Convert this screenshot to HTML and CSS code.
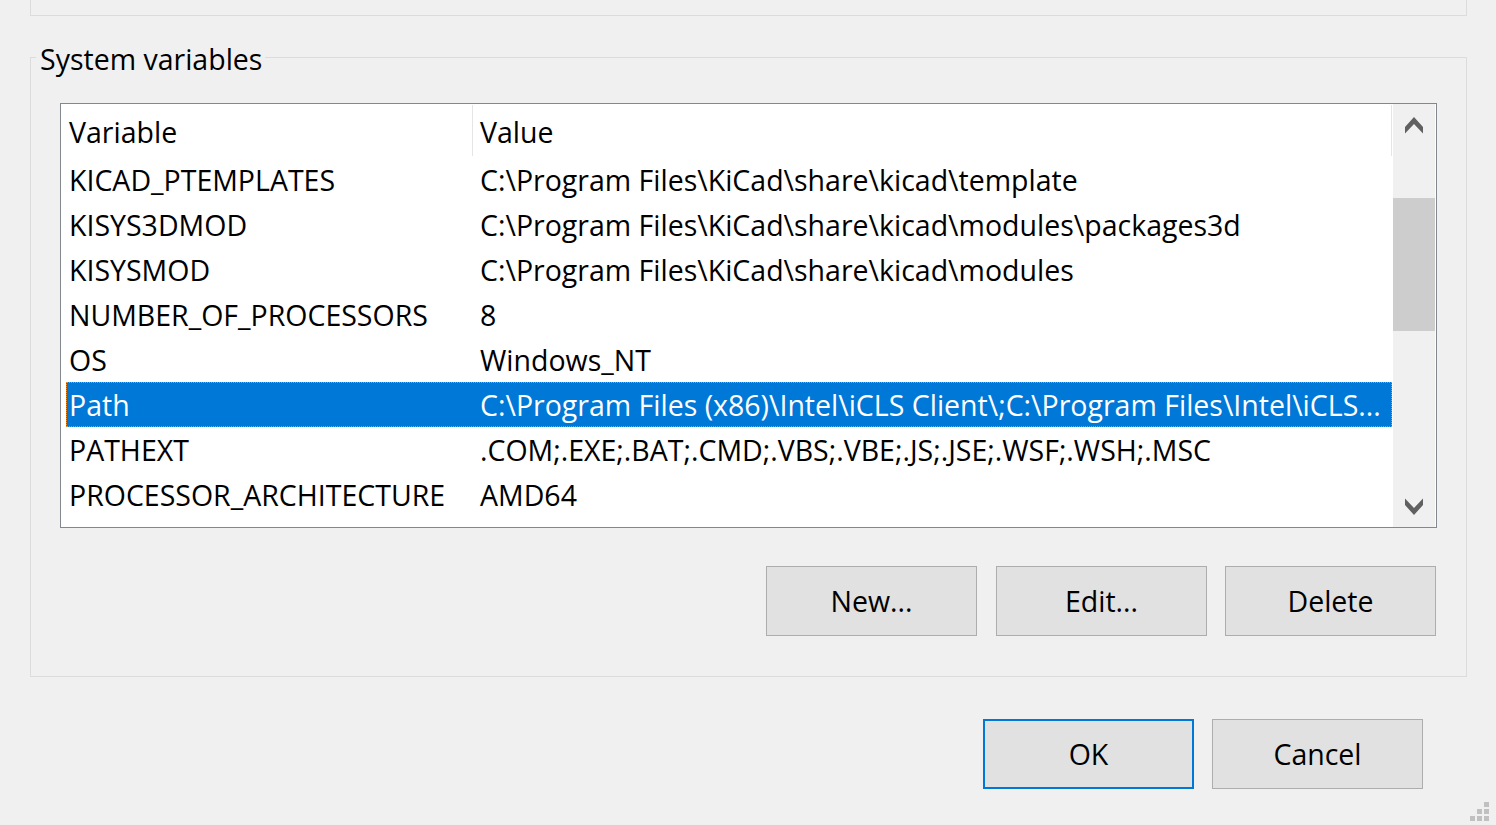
FILE: index.html
```html
<!DOCTYPE html>
<html lang="en">
<head>
<meta charset="utf-8">
<title>Environment Variables</title>
<link rel="stylesheet" href="styles.css">
</head>
<body>
<div class="dialog">
  <div class="prev-group"></div>

  <fieldset class="group">
    <legend class="group-title">System variables</legend>

    <div class="listbox">
      <div class="list-main">
        <div class="list-header">
          <div class="hcell hcell-var">Variable</div>
          <div class="hcell hcell-val">Value</div>
        </div>
        <div class="rows">
          <div class="row"><span class="cell-var">KICAD_PTEMPLATES</span><span class="cell-val">C:\Program Files\KiCad\share\kicad\template</span></div>
          <div class="row"><span class="cell-var">KISYS3DMOD</span><span class="cell-val">C:\Program Files\KiCad\share\kicad\modules\packages3d</span></div>
          <div class="row"><span class="cell-var">KISYSMOD</span><span class="cell-val">C:\Program Files\KiCad\share\kicad\modules</span></div>
          <div class="row"><span class="cell-var">NUMBER_OF_PROCESSORS</span><span class="cell-val">8</span></div>
          <div class="row"><span class="cell-var">OS</span><span class="cell-val">Windows_NT</span></div>
          <div class="row row-selected"><span class="cell-var">Path</span><span class="cell-val">C:\Program Files (x86)\Intel\iCLS Client\;C:\Program Files\Intel\iCLS...</span></div>
          <div class="row"><span class="cell-var">PATHEXT</span><span class="cell-val">.COM;.EXE;.BAT;.CMD;.VBS;.VBE;.JS;.JSE;.WSF;.WSH;.MSC</span></div>
          <div class="row"><span class="cell-var">PROCESSOR_ARCHITECTURE</span><span class="cell-val">AMD64</span></div>
        </div>
      </div>
      <div class="scrollbar">
        <div class="sb-btn">
          <svg class="sb-arrow" width="18" height="17" viewBox="0 0 18 17"><path d="M0 10 L9 0 L18 10 L18 16.5 L9 7 L0 16.5 Z" fill="#606060"/></svg>
        </div>
        <div class="sb-track"><div class="sb-thumb"></div></div>
        <div class="sb-btn">
          <svg class="sb-arrow" width="18" height="17" viewBox="0 0 18 17"><path d="M0 0.5 L9 10 L18 0.5 L18 7 L9 17 L0 7 Z" fill="#606060"/></svg>
        </div>
      </div>
    </div>

    <div class="actions">
      <button class="btn btn-new">New...</button>
      <button class="btn">Edit...</button>
      <button class="btn">Delete</button>
    </div>
  </fieldset>

  <div class="footer">
    <button class="btn btn-default">OK</button>
    <button class="btn">Cancel</button>
  </div>

  <div class="grip">
    <span class="gdot g3"></span>
    <span class="gdot g5"></span><span class="gdot g6"></span>
    <span class="gdot g7"></span><span class="gdot g8"></span><span class="gdot g9"></span>
  </div>
</div>
</body>
</html>
```

FILE: styles.css
```css
html, body {
  margin: 0;
  padding: 0;
  background: #f0f0f0;
}

body {
  width: 1496px;
  height: 825px;
  overflow: hidden;
  font-family: "Open Sans", "Noto Sans", "Liberation Sans", sans-serif;
  font-size: 28.5px;
  color: #000;
}

.dialog {
  position: relative;
  width: 1496px;
  height: 825px;
}

.prev-group {
  margin: 0 29px 0 30px;
  height: 15px;
  border: 1px solid #dcdcdc;
  border-top: none;
}

.group {
  margin: 23px 29px 0 30px;
  padding: 0 29px 40px 29px;
  border: 1px solid #dcdcdc;
  min-width: 0;
}

.group-title {
  margin-left: -24px;
  padding: 0 3px 0 4px;
  height: 36px;
  line-height: 40px;
  font-size: 28.5px;
  overflow: visible;
}

.listbox {
  margin-top: 28px;
  height: 425px;
  box-sizing: border-box;
  border: 1px solid #828790;
  background: #fff;
  display: flex;
  padding-right: 1px;
}

.list-main {
  flex: 1;
  min-width: 0;
  overflow: hidden;
}

.list-header {
  display: flex;
  height: 53px;
  box-sizing: border-box;
  padding: 1px 0;
}

.hcell {
  box-sizing: border-box;
  height: 51px;
  line-height: 55px;
  border-right: 1px solid #e5e5e5;
  white-space: nowrap;
}

.hcell-var {
  width: 412px;
  padding-left: 8px;
}

.hcell-val {
  width: 919px;
  padding-left: 7px;
}

.rows {
  display: flex;
  flex-direction: column;
}

.row {
  display: flex;
  box-sizing: border-box;
  height: 45px;
  line-height: 44px;
  margin: 0 1px 0 5px;
  border: 1px solid transparent;
  white-space: nowrap;
}

.cell-var {
  width: 410px;
  padding-left: 2px;
  box-sizing: border-box;
  flex: none;
}

.cell-val {
  flex: 1;
  min-width: 0;
  padding-left: 3px;
  overflow: hidden;
  text-overflow: ellipsis;
}

.row-selected {
  background: #0078d7;
  color: #fff;
  border: 1px dotted #f08a24;
}

.scrollbar {
  width: 42px;
  flex: none;
  background: #f0f0f0;
  display: flex;
  flex-direction: column;
}

.sb-btn {
  height: 42px;
  display: flex;
  align-items: center;
  justify-content: center;
  flex: none;
}

.sb-arrow {
  display: block;
}

.sb-track {
  flex: 1;
  padding-top: 52px;
}

.sb-thumb {
  height: 133px;
  background: #cdcdcd;
}

.actions {
  display: flex;
  justify-content: flex-end;
  gap: 18px;
  margin: 38px 1px 0 0;
}

.btn-new {
  margin-right: 1px;
}

.btn {
  width: 211px;
  height: 70px;
  box-sizing: border-box;
  background: #e1e1e1;
  border: 1px solid #adadad;
  border-radius: 0;
  font-family: inherit;
  font-size: 28.5px;
  color: #000;
  padding: 0;
  line-height: 66px;
}

.btn-default {
  border: 2px solid #0078d7;
}

.footer {
  display: flex;
  justify-content: flex-end;
  gap: 18px;
  margin-top: 42px;
  padding-right: 73px;
}

.grip {
  position: absolute;
  right: 7px;
  bottom: 4px;
  display: grid;
  grid-template-columns: repeat(3, 5px);
  grid-template-rows: repeat(3, 5px);
  gap: 2px;
}

.gdot {
  width: 5px;
  height: 5px;
  background: #c0c0c0;
}

.g3 { grid-column: 3; grid-row: 1; }
.g5 { grid-column: 2; grid-row: 2; }
.g6 { grid-column: 3; grid-row: 2; }
.g7 { grid-column: 1; grid-row: 3; }
.g8 { grid-column: 2; grid-row: 3; }
.g9 { grid-column: 3; grid-row: 3; }
```
